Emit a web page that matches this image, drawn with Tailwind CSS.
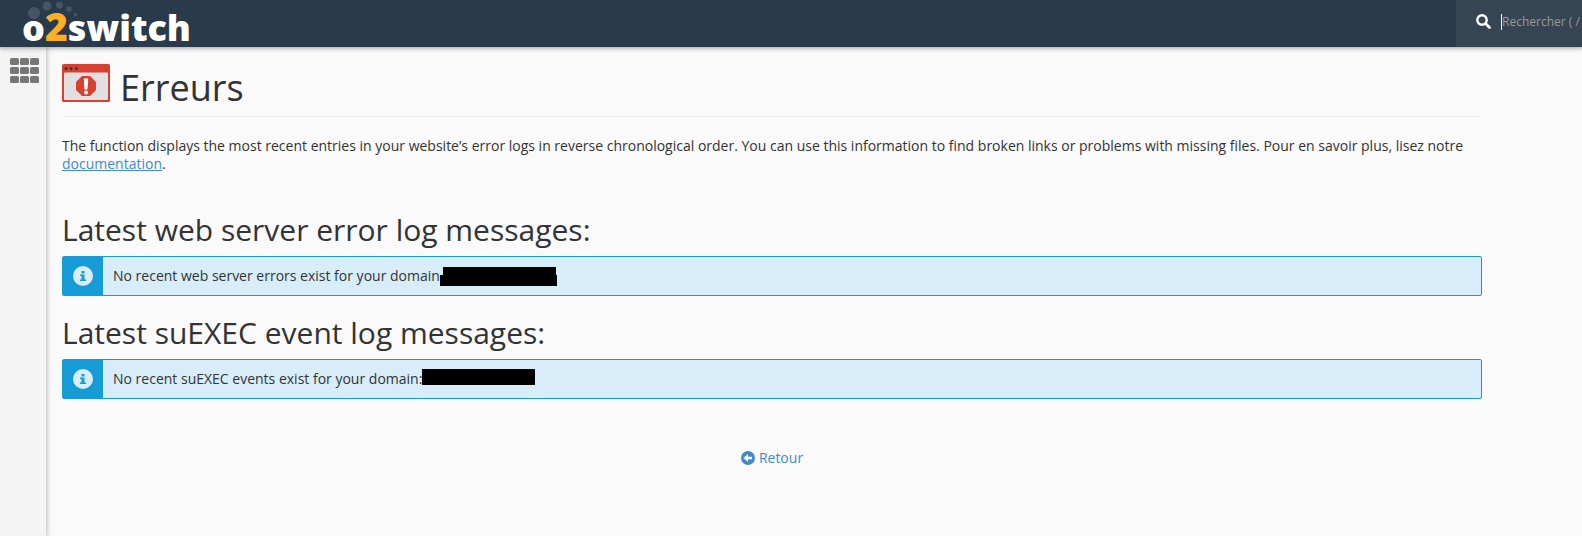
<!DOCTYPE html>
<html lang="fr">
<head>
<meta charset="utf-8">
<meta name="viewport" content="width=device-width, initial-scale=1">
<title>Erreurs</title>
<script src="https://cdn.jsdelivr.net/npm/@tailwindcss/browser@4"></script>
</head>
<body class="flex min-h-screen flex-col overflow-x-hidden bg-[#fafafa] font-['Open_Sans',sans-serif] text-sm leading-[18px] text-[#333333]">
<header class="relative z-10 flex h-[47px] items-stretch justify-between bg-[#293a4a] shadow-[0_0_5px_1px_rgba(0,0,0,0.4)]">
  <a href="#" aria-label="o2switch" class="ml-5 block">
    <svg class="h-[47px] w-[180px] overflow-visible" viewBox="0 0 180 47">
      <g fill="#455565"><circle cx="14" cy="13" r="6"/><circle cx="27" cy="6" r="4.500"/><circle cx="39.500" cy="5" r="3.500"/><circle cx="49" cy="9" r="2.800"/><circle cx="55.500" cy="14.500" r="1.800"/></g>
      <text x="2" y="41" class="fill-white font-['Open_Sans',sans-serif] text-[36px] font-extrabold">o<tspan class="fill-[#fdb022] text-[39px]">2</tspan>switch</text>
    </svg>
  </a>
  <label class="flex w-[126px] items-center gap-[10px] overflow-hidden bg-[#354554] pb-1 pl-5">
    <svg class="size-[15px] shrink-0" viewBox="0 0 15 15" fill="none" stroke="#fff"><circle cx="6" cy="6" r="4.700" stroke-width="2.400"/><path d="M9.500 9.500 13.500 13.500" stroke-width="2.800" stroke-linecap="round"/></svg>
    <span class="flex items-center"><span class="h-4 w-px bg-white"></span><input type="text" aria-label="Rechercher" placeholder="Rechercher ( / )" class="w-40 text-xs text-white outline-none placeholder:text-[#999999]"></span>
  </label>
</header>
<div class="flex grow">
  <nav class="w-[46px] shrink-0 bg-[#f4f4f4] pt-[11px] pl-[10px] shadow-[0_0_5px_1px_rgba(0,0,0,0.25)]">
    <button type="button" aria-label="Outils" class="block">
      <svg class="h-[25px] w-[29px]" viewBox="0 0 29 25" fill="#777"><rect width="9" height="7" rx="1.500"/><rect x="10" width="9" height="7" rx="1.500"/><rect x="20" width="9" height="7" rx="1.500"/><rect y="9" width="9" height="7" rx="1.500"/><rect x="10" y="9" width="9" height="7" rx="1.500"/><rect x="20" y="9" width="9" height="7" rx="1.500"/><rect y="18" width="9" height="7" rx="1.500"/><rect x="10" y="18" width="9" height="7" rx="1.500"/><rect x="20" y="18" width="9" height="7" rx="1.500"/></svg>
    </button>
  </nav>
  <main class="grow pt-4 pr-[100px] pl-4">
    <div class="flex gap-[10px] border-b border-[#eeeeee] pb-2">
      <svg class="mt-px h-[38px] w-12 shrink-0" viewBox="0 0 48 38"><rect width="48" height="38" rx="1.500" fill="#d64130"/><rect x="2" y="8.500" width="44" height="27.500" rx="1" fill="#e0e0e0"/><g fill="#293a4a"><circle cx="4" cy="4.500" r="1.500"/><circle cx="9" cy="4.500" r="1.500"/><circle cx="14.500" cy="4.500" r="1.500"/></g><path d="M20 12h8l6 6v8l-6 6h-8l-6-6v-8z" fill="#d64130"/><path d="M21.800 14.500h4.400l-.7 11h-3z" fill="#fff"/><circle cx="24" cy="28.500" r="2" fill="#fff"/></svg>
      <h1 class="pt-[5px] text-[36px] leading-[40px] font-normal">Erreurs</h1>
    </div>
    <p class="mt-5">The function displays the most recent entries in your website’s error logs in reverse chronological order. You can use this information to find broken links or problems with missing files. Pour en savoir plus, lisez notre <a href="#" class="text-[#428bca] underline">documentation</a>.</p>
    <h2 class="mt-10 text-[30px] leading-[33px] font-normal">Latest web server error log messages:</h2>
    <div class="mt-[10px] flex min-h-10 rounded-[2px] border border-[#179bd7] bg-[#d7edf9]">
      <div class="flex w-10 shrink-0 items-center justify-center bg-[#179bd7]">
        <svg class="size-5" viewBox="0 0 20 20"><circle cx="10" cy="10" r="10" fill="#d7edf9"/><path d="M8.500 5h3v2.500h-3zM7 8.500h4.500v5H13V15H7v-1.500h1.500V10H7z" fill="#179bd7"/></svg>
      </div>
      <p class="flex items-center pl-[10px]">No recent web server errors exist for your domain<svg class="h-[19px] w-[118px]" viewBox="0 0 118 19"><path d="M3 0H116V8H117V19H0V8H3z"/></svg></p>
    </div>
    <h2 class="mt-5 text-[30px] leading-[33px] font-normal">Latest suEXEC event log messages:</h2>
    <div class="mt-[10px] flex min-h-10 rounded-[2px] border border-[#179bd7] bg-[#d7edf9]">
      <div class="flex w-10 shrink-0 items-center justify-center bg-[#179bd7]">
        <svg class="size-5" viewBox="0 0 20 20"><circle cx="10" cy="10" r="10" fill="#d7edf9"/><path d="M8.500 5h3v2.500h-3zM7 8.500h4.500v5H13V15H7v-1.500h1.500V10H7z" fill="#179bd7"/></svg>
      </div>
      <p class="flex items-center pl-[10px]">No recent suEXEC events exist for your domain:<span class="mb-[5px] h-4 w-[113px] bg-black"></span></p>
    </div>
    <div class="mt-[50px] flex justify-center">
      <a href="#" class="flex items-center gap-1 text-[#428bca]"><svg class="size-[14px]" viewBox="0 0 14 14"><circle cx="7" cy="7" r="7" fill="#428bca"/><path d="M2.500 7 7 3v2.800h4v2.400H7V11z" fill="#fafafa"/></svg>Retour</a>
    </div>
  </main>
</div>
</body>
</html>
